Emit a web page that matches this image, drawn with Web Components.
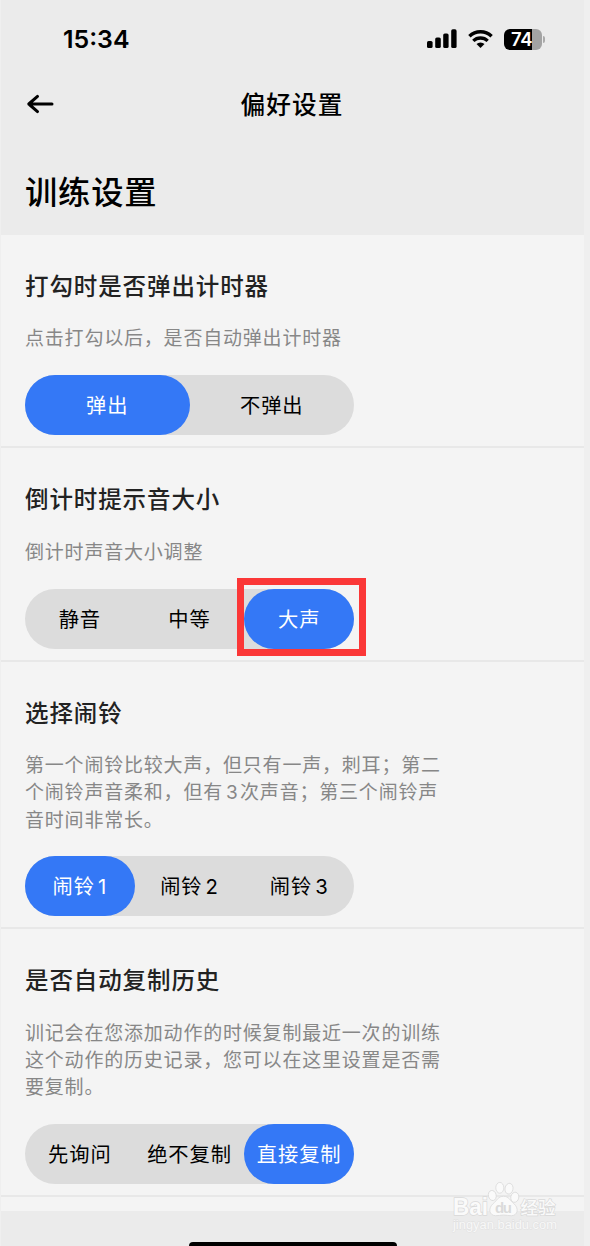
<!DOCTYPE html>
<html lang="zh-CN">
<head>
<meta charset="utf-8">
<title>偏好设置</title>
<style>
body {
  margin: 0;
  background: #efefef;
  font-family: "Noto Sans CJK SC", sans-serif;
}
.num {
  font-family: Inter, sans-serif;
  line-height: 1;
  margin-left: 3px;
}
setting-row > .num {
  margin-right: 1.5px;
}
</style>
</head>
<body>
<settings-page>
  <status-bar slot="top" time="15:34" battery="74"></status-bar>
  <nav-bar slot="top">偏好设置</nav-bar>
  <span slot="heading">训练设置</span>
  <setting-row>
    <span slot="title">打勾时是否弹出计时器</span>
    点击打勾以后，是否自动弹出计时器
    <segmented-control slot="control">
      <segment-item selected>弹出</segment-item>
      <segment-item>不弹出</segment-item>
    </segmented-control>
  </setting-row>
  <setting-row>
    <span slot="title">倒计时提示音大小</span>
    倒计时声音大小调整
    <segmented-control slot="control">
      <segment-item>静音</segment-item>
      <segment-item>中等</segment-item>
      <segment-item selected marked>大声</segment-item>
    </segmented-control>
  </setting-row>
  <setting-row>
    <span slot="title">选择闹铃</span>
    第一个闹铃比较大声，但只有一声，刺耳；第二<br>个闹铃声音柔和，但有<span class="num">3</span>次声音；第三个闹铃声<br>音时间非常长。
    <segmented-control slot="control">
      <segment-item selected>闹铃<span class="num">1</span></segment-item>
      <segment-item>闹铃<span class="num">2</span></segment-item>
      <segment-item>闹铃<span class="num">3</span></segment-item>
    </segmented-control>
  </setting-row>
  <setting-row>
    <span slot="title">是否自动复制历史</span>
    训记会在您添加动作的时候复制最近一次的训练<br>这个动作的历史记录，您可以在这里设置是否需<br>要复制。
    <segmented-control slot="control">
      <segment-item>先询问</segment-item>
      <segment-item>绝不复制</segment-item>
      <segment-item selected>直接复制</segment-item>
    </segmented-control>
  </setting-row>
  <water-mark slot="overlay"></water-mark>
</settings-page>

<script>
function attach(host, html) {
  const template = document.createElement("template");
  template.innerHTML = html;
  host.attachShadow({ mode: "open" });
  host.shadowRoot.appendChild(template.content.cloneNode(true));
}

class SettingsPage extends HTMLElement {
  constructor() {
    super();
    attach(this, `\
<style>
:host {
  display: flex;
  flex-direction: column;
  position: relative;
  box-sizing: border-box;
  width: 590px;
  height: 1246px;
  padding: 0 6px 0 1px;
  overflow: hidden;
}
header {
  display: flex;
  flex-direction: column;
  height: 235px;
  background: #ebebeb;
}
h1 {
  margin: 33px 0 0 24px;
  font-size: 32.3px;
  line-height: 48px;
  font-weight: 500;
  letter-spacing: 0.8px;
  color: #000;
}
main {
  height: 976px;
  background: #f4f4f4;
}
footer {
  flex: 1;
  display: flex;
  justify-content: center;
  align-items: flex-end;
  background: #ebebeb;
}
.home {
  width: 208px;
  height: 4px;
  background: #000;
  border-radius: 5px 5px 0 0;
}
</style>
<header><slot name="top"></slot><h1><slot name="heading"></slot></h1></header>
<main><slot></slot></main>
<footer><div class="home"></div></footer>
<slot name="overlay"></slot>
`);
  }
}

class StatusBar extends HTMLElement {
  constructor() {
    super();
    attach(this, `\
<style>
:host {
  display: flex;
  align-items: center;
  height: 78px;
  padding: 0 39px 0 62px;
  font-family: Inter, sans-serif;
  color: #000;
}
.time {
  flex: 1;
  font-size: 24.9px;
  font-weight: 600;
}
.bars { margin-right: 11px; }
.wifi { margin-right: 11px; }
.battery {
  display: flex;
  align-items: center;
  gap: 1px;
}
.body {
  box-sizing: border-box;
  width: 38px;
  height: 21px;
  padding-left: 7px;
  border-radius: 6px;
  background: linear-gradient(90deg, #000 28px, #a3a3a3 28px);
  color: #fff;
  font-size: 18.5px;
  line-height: 21px;
  font-weight: 600;
  letter-spacing: -0.4px;
}
.cap {
  width: 2px;
  height: 7px;
  border-radius: 0 2px 2px 0;
  background: #aaa;
}
</style>
<span class="time"></span>
<svg class="bars" width="30" height="20" viewBox="0 0 30 20">
  <rect x="0" y="12" width="5.6" height="7" rx="1.6"/>
  <rect x="8.2" y="8.5" width="5.6" height="10.5" rx="1.6"/>
  <rect x="16.2" y="4.5" width="5.4" height="14.5" rx="1.6"/>
  <rect x="24.2" y="0.3" width="5.4" height="18.7" rx="1.6"/>
</svg>
<svg class="wifi" width="25" height="20" viewBox="0 0 25 20">
  <path d="M1.4 7.2a16 16 0 0 1 22.2 0" fill="none" stroke="#000" stroke-width="3.4"/>
  <path d="M5.3 11.9a10.4 10.4 0 0 1 14.4 0" fill="none" stroke="#000" stroke-width="3.3"/>
  <path d="M12.5 19 8.5 15.1a5.8 5.8 0 0 1 8 0z"/>
</svg>
<span class="battery"><span class="body"></span><span class="cap"></span></span>
`);
    this.shadowRoot.querySelector(".time").textContent = this.getAttribute("time");
    this.shadowRoot.querySelector(".body").textContent = this.getAttribute("battery");
  }
}

class NavBar extends HTMLElement {
  constructor() {
    super();
    attach(this, `\
<style>
:host {
  display: grid;
  grid-template-columns: 40px 1fr 40px;
  align-items: center;
  height: 52px;
  padding: 0 26px 0 25px;
  margin-bottom: 3px;
  font-size: 24.7px;
  line-height: 48px;
  font-weight: 500;
  letter-spacing: 1px;
  color: #000;
}
.title {
  padding-bottom: 3px;
  text-align: center;
}
</style>
<svg width="28" height="22" viewBox="0 0 28 22" fill="none" stroke="#000" stroke-width="3" stroke-linecap="round" stroke-linejoin="round">
  <path d="M2.8 11H26M11.500 3.400 2.800 11l8.700 7.600"/>
</svg>
<span class="title"><slot></slot></span>
`);
  }
}

class SettingRow extends HTMLElement {
  constructor() {
    super();
    attach(this, `\
<style>
:host {
  display: block;
  padding: 35px 24px 11px;
  border-bottom: 2px solid #e8e8e8;
}
h2 {
  margin: 0 0 23.4px;
  font-size: 23.5px;
  line-height: 30px;
  font-weight: 500;
  letter-spacing: 0.9px;
  color: #222;
}
.text {
  margin-bottom: 24.6px;
  font-size: 19px;
  line-height: 27.3px;
  font-weight: 400;
  letter-spacing: 0.8px;
  color: #878787;
  white-space: nowrap;
}
</style>
<h2><slot name="title"></slot></h2>
<div class="text"><slot></slot></div>
<slot name="control"></slot>
`);
  }
}

class SegmentedControl extends HTMLElement {
  constructor() {
    super();
    attach(this, `\
<style>
:host {
  display: flex;
  width: 329px;
  height: 60px;
  border-radius: 30px;
  background: #dcdcdc;
}
</style>
<slot></slot>
`);
  }
}

class SegmentItem extends HTMLElement {
  constructor() {
    super();
    attach(this, `\
<style>
:host {
  flex: 1 1 0;
  display: flex;
  align-items: center;
  justify-content: center;
  position: relative;
  border-radius: 30px;
  font-size: 20.3px;
  line-height: 30px;
  letter-spacing: 0.9px;
  color: #000;
  white-space: nowrap;
  cursor: pointer;
}
:host([selected]) {
  background: #3478f6;
  color: #fff;
}
.label { padding-bottom: 2px; }
.mark { display: none; }
:host([marked]) .mark {
  display: block;
  position: absolute;
  inset: -11px -12px -7px -7px;
  border: 7px solid #fb3737;
}
</style>
<div class="label"><slot></slot></div><div class="mark"></div>
`);
    this.addEventListener("click", () => {
      for (const item of this.parentElement.children) item.removeAttribute("selected");
      this.setAttribute("selected", "");
    });
  }
}

class WaterMark extends HTMLElement {
  constructor() {
    super();
    attach(this, `\
<style>
:host {
  position: absolute;
  left: 450px;
  top: 1180px;
  pointer-events: none;
}
svg { display: block; }
text {
  fill: #fafafa;
  stroke: #d9d9d9;
  stroke-width: 1.4px;
  paint-order: stroke;
}
</style>
<svg width="112" height="56" viewBox="0 0 112 56">
  <text x="3" y="35" font-family="Liberation Sans, sans-serif" font-size="23" font-weight="700" textLength="35" lengthAdjust="spacingAndGlyphs">Bai</text>
  <g fill="#fafafa" stroke="#d9d9d9" stroke-width="0.8">
    <ellipse cx="42.3" cy="15.5" rx="3.9" ry="5.1" transform="rotate(-12 42.3 15.5)"/>
    <ellipse cx="49.8" cy="7.8" rx="4" ry="5.4"/>
    <ellipse cx="59" cy="8.7" rx="4" ry="5.4" transform="rotate(10 59 8.7)"/>
    <ellipse cx="64.8" cy="17.3" rx="4" ry="5.1" transform="rotate(12 64.8 17.3)"/>
    <path d="M53.5 16.3c5.5 0 6.5 4.2 10.2 7.2 5.5 4.5 4.3 12-2.2 12.2-3 .1-5-.7-8-.7s-5 .8-8 .7c-6.5-.2-7.7-7.7-2.2-12.2 3.7-3 4.7-7.2 10.2-7.2z"/>
  </g>
  <text x="45" y="33" font-family="Liberation Sans, sans-serif" font-size="15" font-weight="700" textLength="17" style="fill:#dadada;stroke:none">du</text>
  <text x="70.5" y="34" font-family="Noto Sans CJK SC, sans-serif" font-size="17.5" font-weight="500">经验</text>
  <text x="3" y="48.5" font-family="Liberation Sans, sans-serif" font-size="12" textLength="104" lengthAdjust="spacingAndGlyphs" style="fill:#f8f8f8;stroke:#e0e0e0;stroke-width:0.8px">jingyan.baidu.com</text>
</svg>
`);
  }
}

customElements.define("settings-page", SettingsPage);
customElements.define("status-bar", StatusBar);
customElements.define("nav-bar", NavBar);
customElements.define("setting-row", SettingRow);
customElements.define("segmented-control", SegmentedControl);
customElements.define("segment-item", SegmentItem);
customElements.define("water-mark", WaterMark);
</script>
</body>
</html>
